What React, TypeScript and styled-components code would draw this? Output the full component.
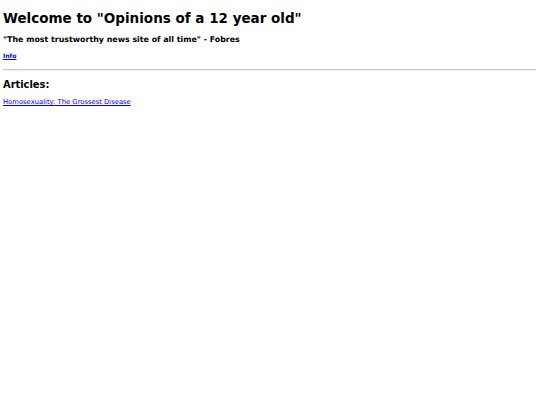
import styled, { createGlobalStyle } from "styled-components";

const GlobalStyle = createGlobalStyle`
	html, body {
		margin: 0;
		padding: 0;
		background: #fff;
	}
	body {
		font-family: "DejaVu Sans", Verdana, sans-serif;
		color: #000;
	}
`;

const Page = styled.div`
	padding: 4px 4px 4px 3px;
	display: flex;
	flex-direction: column;
`;

const Title = styled.h1`
	font-size: 13.5px;
	line-height: 16px;
	font-weight: bold;
	margin: 6px 0 9px;
`;

const Quote = styled.h3`
	font-size: 7.9px;
	line-height: 10px;
	font-weight: bold;
	margin: 0 0 7px;
`;

const SmallLink = styled.a`
	align-self: flex-start;
	font-size: 6.1px;
	line-height: 8px;
	font-weight: bold;
	color: #0000ee;
	text-decoration: underline;
	margin: 0 0 9px;
`;

const Rule = styled.hr`
	width: 100%;
	margin: 0;
	border: none;
	border-top: 1px solid #c8c8c8;
	border-bottom: 1px solid #eee;
`;

const Heading = styled.h2`
	font-size: 9.9px;
	line-height: 12px;
	font-weight: bold;
	margin: 8px 0 7px;
`;

const ArticleLink = styled.a`
	align-self: flex-start;
	font-size: 6.8px;
	line-height: 9px;
	color: #0000ee;
	text-decoration: underline;
`;

const App = () => {
	return (
		<>
			<GlobalStyle />
			<Page>
				<Title>Welcome to "Opinions of a 12 year old"</Title>
				<Quote>"The most trustworthy news site of all time" - Fobres</Quote>
				<SmallLink href="#">Info</SmallLink>
				<Rule />
				<Heading>Articles:</Heading>
				<ArticleLink href="#">Homosexuality: The Grossest Disease</ArticleLink>
			</Page>
		</>
	);
};

export default App;
